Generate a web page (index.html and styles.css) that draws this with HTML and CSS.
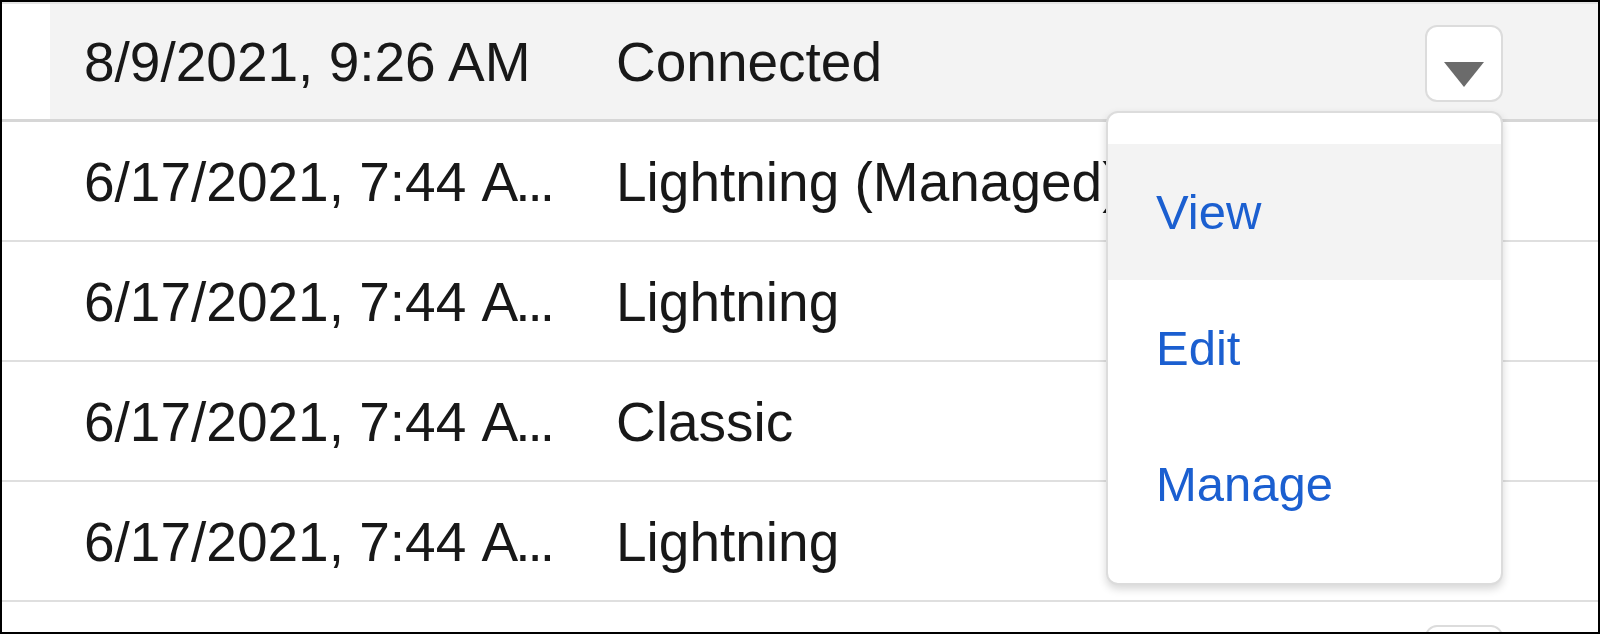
FILE: index.html
```html
<!DOCTYPE html>
<html lang="en">
<head>
<meta charset="utf-8">
<title>Table row actions</title>
<link rel="stylesheet" href="styles.css">
</head>
<body>
<div class="frame">
  <div class="table">
    <div class="row row-active">
      <div class="cell cell-gutter"></div>
      <div class="cell cell-text">8/9/2021, 9:26 AM</div>
      <div class="cell cell-text">Connected</div>
      <div class="cell cell-action">
        <button class="menu-btn" type="button" aria-label="Show actions">
          <svg class="caret" viewBox="0 0 40 25" width="40" height="25"><polygon points="0,0 40,0 20,25" /></svg>
        </button>
        <div class="menu">
          <div class="menu-item menu-item-hover">View</div>
          <div class="menu-item">Edit</div>
          <div class="menu-item">Manage</div>
        </div>
      </div>
    </div>
    <div class="row">
      <div class="cell cell-gutter"></div>
      <div class="cell cell-text"><span>6/17/2021, 7:44 <span class="ell">A..</span>.</span></div>
      <div class="cell cell-text">Lightning (Managed)</div>
      <div class="cell cell-action">
        <button class="menu-btn" type="button" aria-label="Show actions">
          <svg class="caret" viewBox="0 0 40 25" width="40" height="25"><polygon points="0,0 40,0 20,25" /></svg>
        </button>
      </div>
    </div>
    <div class="row">
      <div class="cell cell-gutter"></div>
      <div class="cell cell-text"><span>6/17/2021, 7:44 <span class="ell">A..</span>.</span></div>
      <div class="cell cell-text">Lightning</div>
      <div class="cell cell-action">
        <button class="menu-btn" type="button" aria-label="Show actions">
          <svg class="caret" viewBox="0 0 40 25" width="40" height="25"><polygon points="0,0 40,0 20,25" /></svg>
        </button>
      </div>
    </div>
    <div class="row">
      <div class="cell cell-gutter"></div>
      <div class="cell cell-text"><span>6/17/2021, 7:44 <span class="ell">A..</span>.</span></div>
      <div class="cell cell-text">Classic</div>
      <div class="cell cell-action">
        <button class="menu-btn" type="button" aria-label="Show actions">
          <svg class="caret" viewBox="0 0 40 25" width="40" height="25"><polygon points="0,0 40,0 20,25" /></svg>
        </button>
      </div>
    </div>
    <div class="row">
      <div class="cell cell-gutter"></div>
      <div class="cell cell-text"><span>6/17/2021, 7:44 <span class="ell">A..</span>.</span></div>
      <div class="cell cell-text">Lightning</div>
      <div class="cell cell-action">
        <button class="menu-btn" type="button" aria-label="Show actions">
          <svg class="caret" viewBox="0 0 40 25" width="40" height="25"><polygon points="0,0 40,0 20,25" /></svg>
        </button>
      </div>
    </div>
    <div class="row">
      <div class="cell cell-gutter"></div>
      <div class="cell cell-text"></div>
      <div class="cell cell-text"></div>
      <div class="cell cell-action">
        <button class="menu-btn" type="button" aria-label="Show actions">
          <svg class="caret" viewBox="0 0 40 25" width="40" height="25"><polygon points="0,0 40,0 20,25" /></svg>
        </button>
      </div>
    </div>
  </div>
</div>
</body>
</html>
```

FILE: styles.css
```css
* {
  box-sizing: border-box;
}

html, body {
  margin: 0;
  padding: 0;
  background: #ffffff;
}

body {
  font-family: "Liberation Sans", Arial, Helvetica, sans-serif;
  color: #181818;
}

.frame {
  width: 1600px;
  height: 634px;
  border: 2px solid #000000;
  overflow: hidden;
  background: #ffffff;
}

.table {
  border-top: 2px solid #e4e4e4;
}

.row {
  display: grid;
  grid-template-columns: 48px 532px 1fr auto;
  height: 120px;
  border-bottom: 2px solid #dfdfdf;
  background: #ffffff;
}

.row-active {
  height: 118px;
  background: #f3f3f3;
  border-bottom: 3px solid #d6d6d6;
}

.cell {
  min-width: 0;
}

.cell-gutter {
  background: #ffffff;
}

.cell-text {
  display: flex;
  align-items: center;
  padding: 1px 0 0 34px;
  font-size: 55px;
  white-space: nowrap;
  overflow: hidden;
}

.ell {
  letter-spacing: -3px;
}

.cell-action {
  position: relative;
  display: flex;
  align-items: center;
  padding: 4px 95px 0 0;
}

.menu-btn {
  display: flex;
  justify-content: center;
  align-items: flex-start;
  width: 78px;
  height: 77px;
  padding: 35px 0 0;
  margin: 0;
  background: #ffffff;
  border: 2px solid #dcdcdc;
  border-radius: 12px;
}

.caret {
  display: block;
  fill: #6b6b6b;
}

.menu {
  position: absolute;
  top: 107px;
  right: 95px;
  z-index: 10;
  width: 397px;
  padding: 31px 0;
  background: #ffffff;
  border: 2px solid #dcdcdc;
  border-radius: 12px;
  box-shadow: 0 4px 8px rgba(0, 0, 0, 0.16);
}

.menu-item {
  display: flex;
  align-items: center;
  height: 136px;
  padding-left: 48px;
  font-size: 49px;
  color: #1b5fd0;
}

.menu-item-hover {
  background: #f3f3f3;
}
```
